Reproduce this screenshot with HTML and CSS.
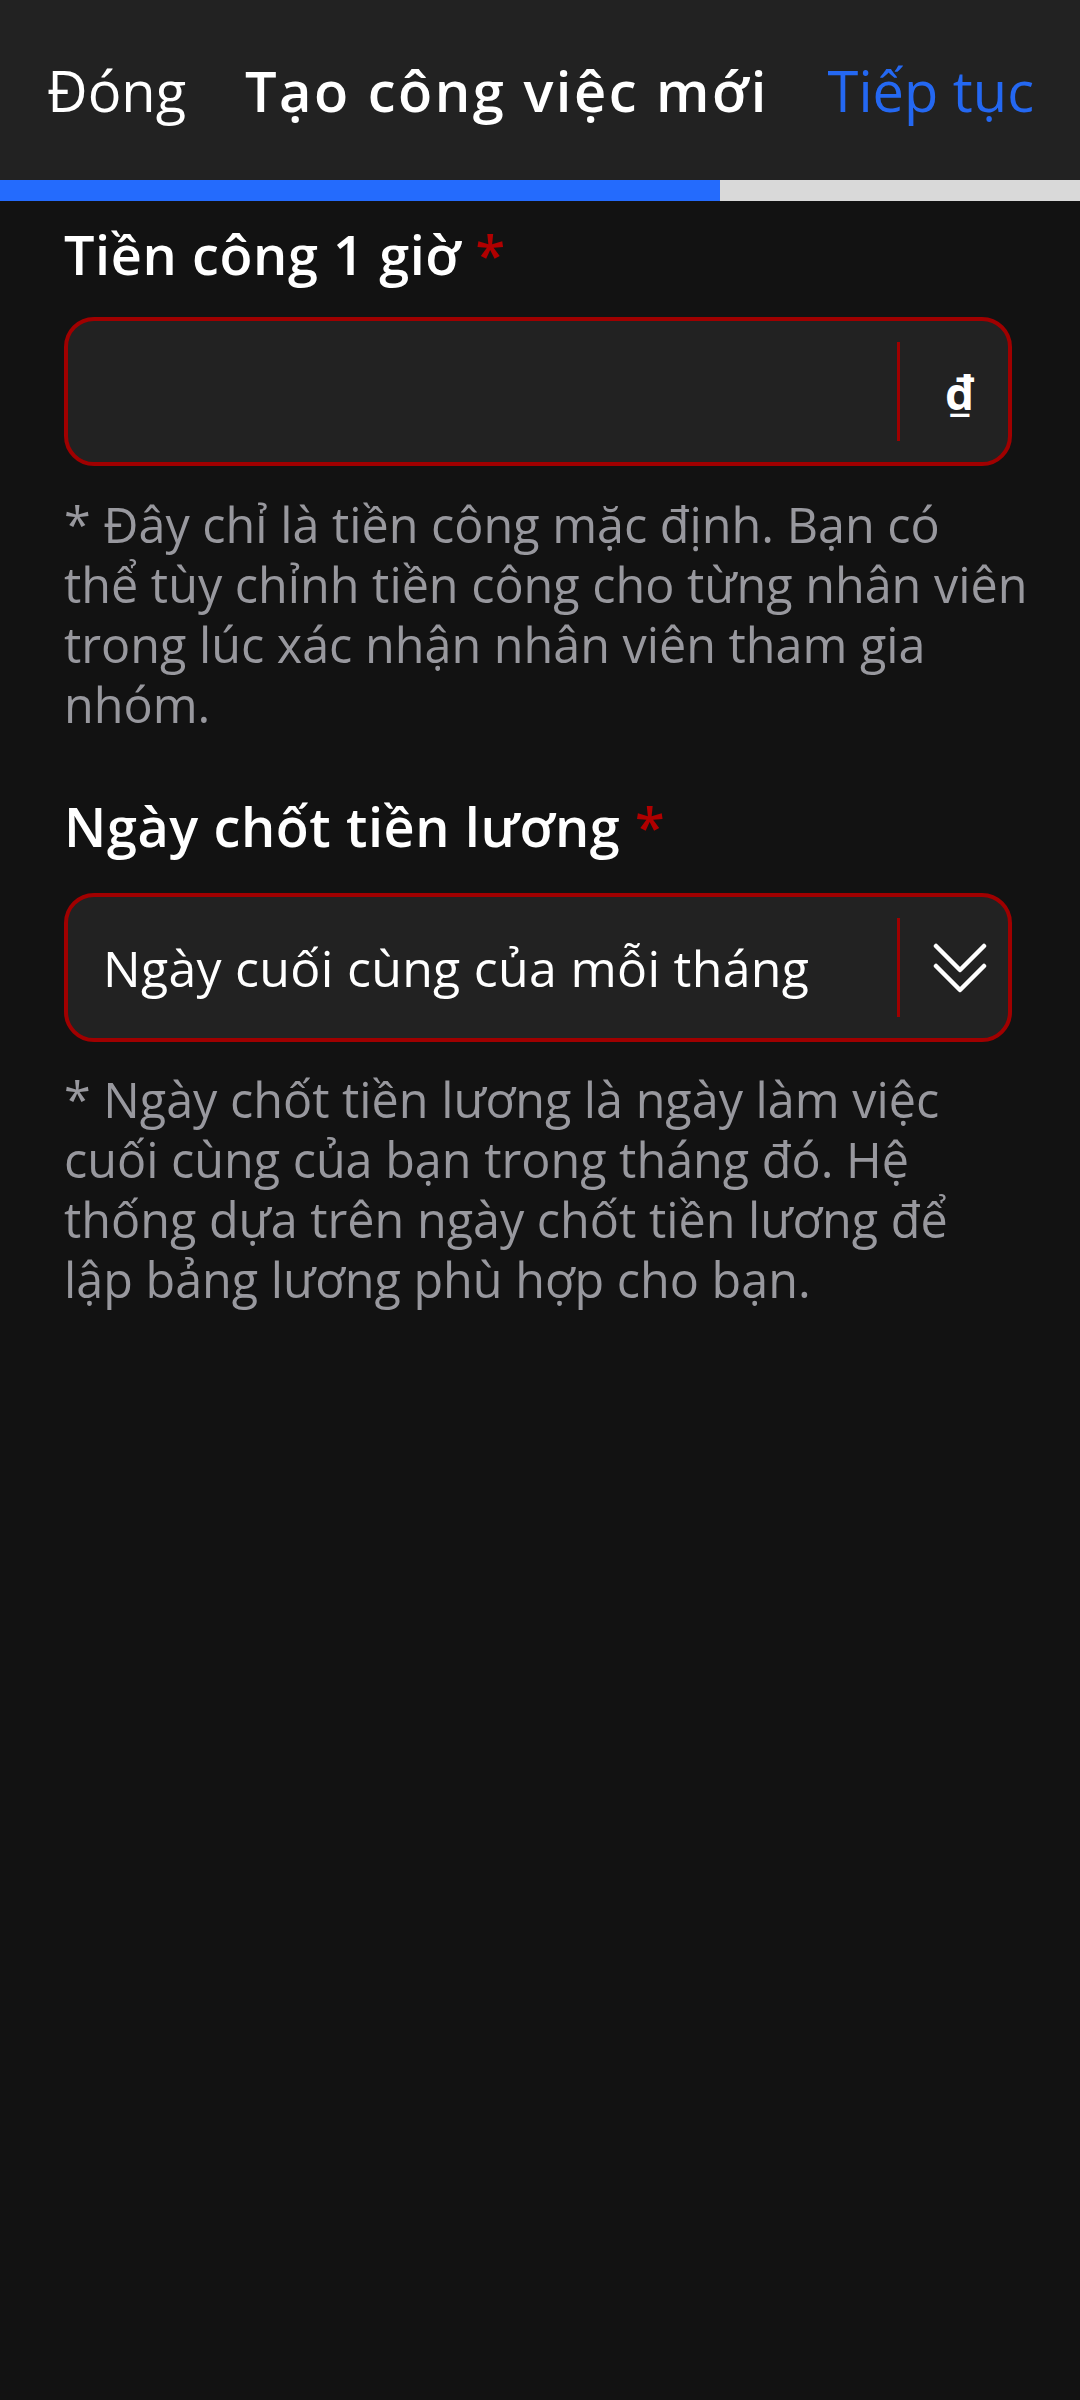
FILE: index.html
```html
<!DOCTYPE html>
<html lang="vi">
<head>
<meta charset="utf-8">
<link rel="stylesheet" href="styles.css">
</head>
<body>
<header class="topbar">
  <span class="btn-close">Đóng</span>
  <span class="title">Tạo công việc mới</span>
  <span class="btn-next">Tiếp tục</span>
</header>
<div class="progress"><div class="progress-fill" style="width:66.67%"></div></div>
<main class="content">
  <label class="label label-first">Tiền công 1 giờ <span class="req">*</span></label>
  <div class="field field-first">
    <div class="field-value"></div>
    <div class="field-sep"></div>
    <div class="field-suffix"><span class="currency">₫</span></div>
  </div>
  <p class="hint hint-first">* Đây chỉ là tiền công mặc định. Bạn có<br>thể tùy chỉnh tiền công cho từng nhân viên<br>trong lúc xác nhận nhân viên tham gia<br>nhóm.</p>

  <label class="label label-second">Ngày chốt tiền lương <span class="req">*</span></label>
  <div class="field field-second">
    <div class="field-value">Ngày cuối cùng của mỗi tháng</div>
    <div class="field-sep"></div>
    <div class="field-suffix">
      <svg class="chevrons" width="54" height="50" viewBox="0 0 54 50" fill="none" stroke="#ffffff" stroke-width="4.5" stroke-linecap="round" stroke-linejoin="round">
        <polyline points="3,3 27,27 51,3"/>
        <polyline points="3,23 27,47 51,23"/>
      </svg>
    </div>
  </div>
  <p class="hint hint-second">* Ngày chốt tiền lương là ngày làm việc<br>cuối cùng của bạn trong tháng đó. Hệ<br>thống dựa trên ngày chốt tiền lương để<br>lập bảng lương phù hợp cho bạn.</p>
</main>
</body>
</html>
```
FILE: styles.css
```css
html, body {
  margin: 0;
  padding: 0;
  background: #121212;
}
body {
  width: 1080px;
  min-height: 2400px;
  font-family: "Open Sans", "Noto Sans", sans-serif;
  color: #ffffff;
}
.topbar {
  height: 180px;
  background: #222222;
  display: flex;
  align-items: center;
  justify-content: space-between;
  padding: 0 46px 0 47px;
  box-sizing: border-box;
}
.btn-close {
  font-size: 56px;
  font-weight: 500;
  color: #ffffff;
}
.title {
  font-size: 56px;
  font-weight: 600;
  letter-spacing: 2.5px;
  color: #ffffff;
}
.btn-next {
  font-size: 56px;
  font-weight: 400;
  color: #2468f2;
}
.progress {
  height: 21px;
  background: #d9d9d9;
}
.progress-fill {
  height: 100%;
  background: #246bfd;
}
.content {
  padding: 0 30px 0 64px;
}
.label {
  display: block;
  font-size: 54px;
  font-weight: 600;
  line-height: 60px;
  letter-spacing: 0.6px;
  color: #ffffff;
}
.label-first {
  margin-top: 23px;
}
.label-second {
  margin-top: 62px;
}
.req {
  color: #b00000;
}
.field {
  height: 149px;
  margin-right: 38px;
  box-sizing: border-box;
  border: 4px solid #a00000;
  border-radius: 30px;
  background: #222222;
  display: flex;
  align-items: center;
}
.field-first {
  margin-top: 33px;
}
.field-second {
  margin-top: 37px;
}
.field-value {
  flex: 1;
  padding-left: 35px;
  font-size: 50px;
  letter-spacing: 0.3px;
  color: #ffffff;
  white-space: nowrap;
}
.field-sep {
  width: 3px;
  height: 99px;
  background: #a00000;
}
.field-suffix {
  width: 108px;
  display: flex;
  justify-content: center;
  align-items: center;
}
.currency {
  font-size: 46px;
  font-weight: 700;
  line-height: 1;
  position: relative;
  left: 6px;
}
.chevrons {
  display: block;
  position: relative;
  left: 6px;
}
.hint {
  margin: 0;
  font-size: 48.5px;
  line-height: 60px;
  color: #98989e;
}
.hint-first {
  margin-top: 28px;
}
.hint-second {
  margin-top: 27px;
}
```
